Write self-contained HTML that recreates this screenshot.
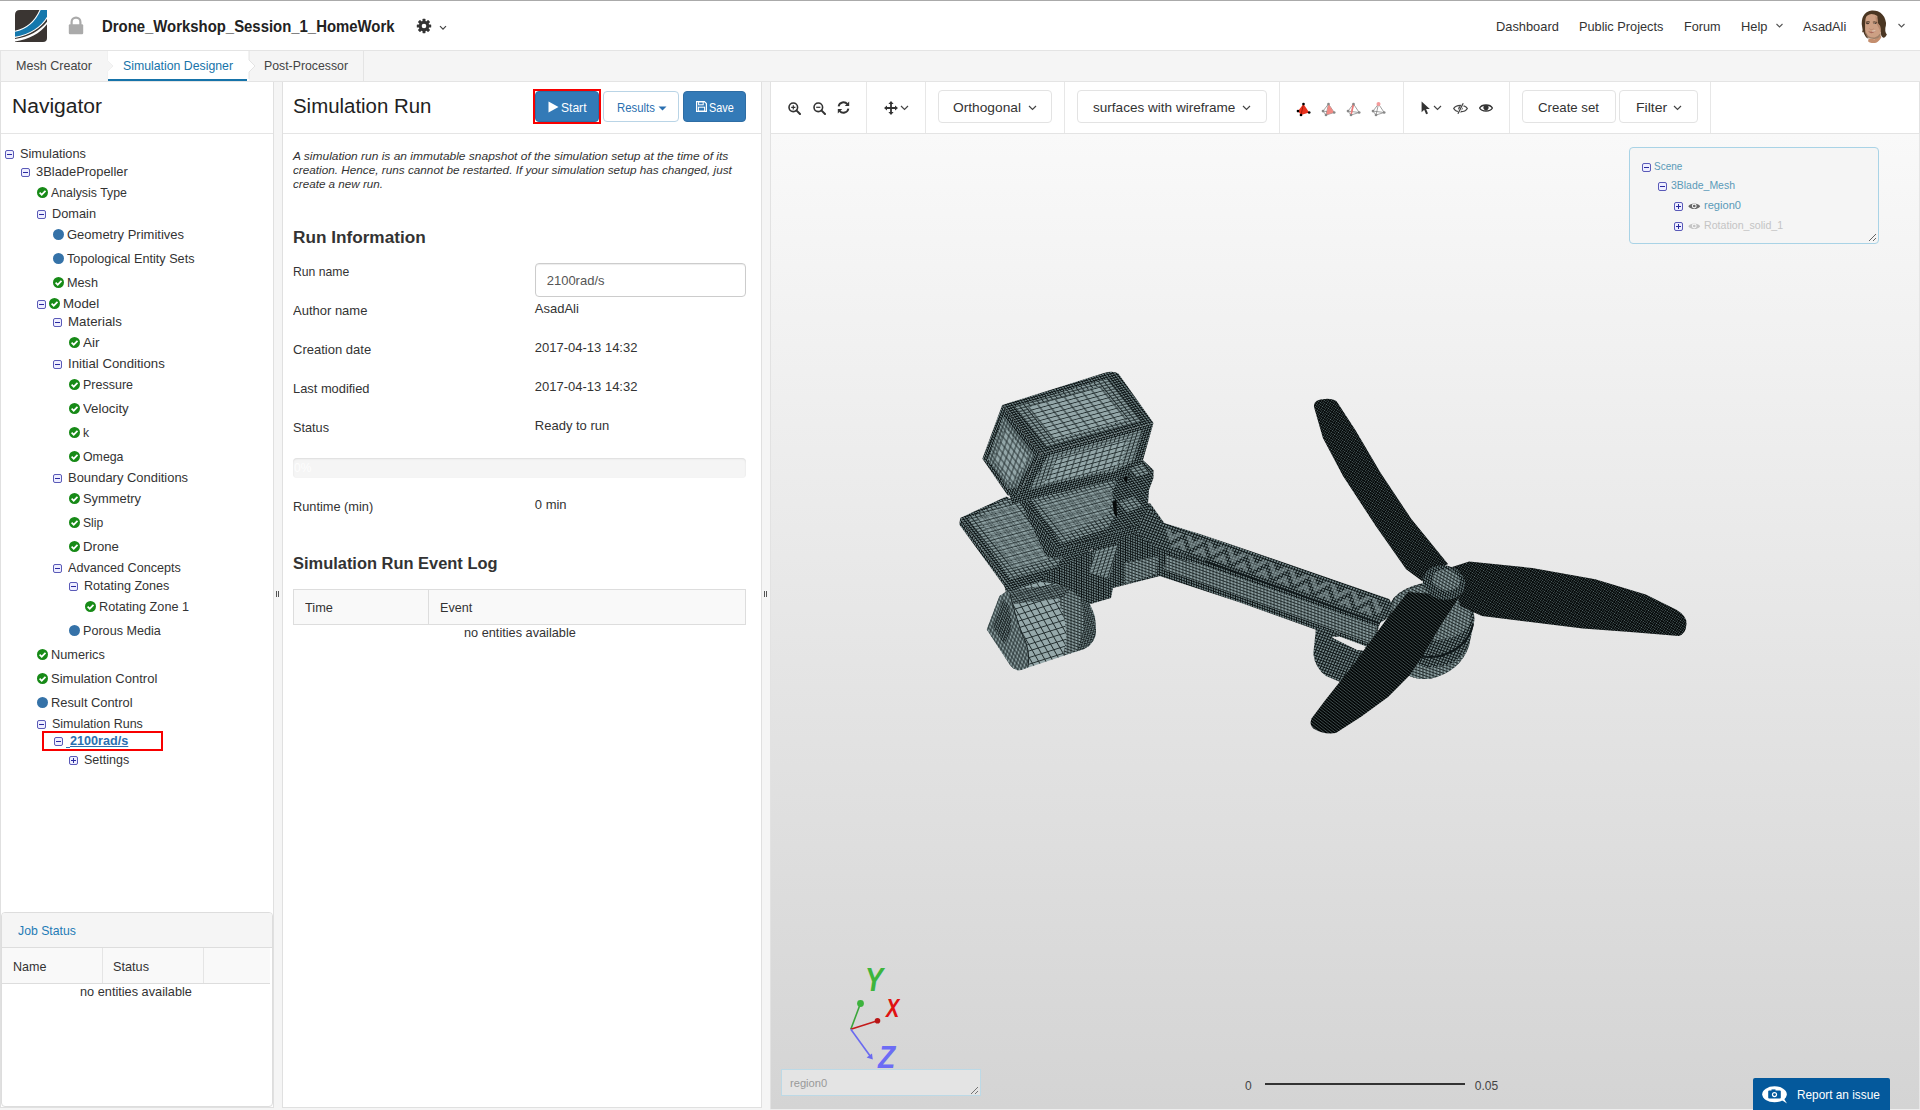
<!DOCTYPE html>
<html lang="en"><head><meta charset="utf-8"><title>SimScale Workbench</title>
<style>
*{box-sizing:border-box;margin:0;padding:0}
html,body{width:1920px;height:1110px;overflow:hidden;background:#f5f5f5;font-family:"Liberation Sans",sans-serif;font-size:14px;color:#333}
.a{position:absolute}
.t{position:absolute;white-space:nowrap;line-height:1.117;display:block;transform-origin:0 50%}
.tg{position:absolute;width:9px;height:9px;border:1px solid #5a5ab8;border-radius:2px;background:#eef}
.tg:before{content:"";position:absolute;left:1px;top:3px;width:5px;height:1px;background:#2a2aa0}
.tg.p:after{content:"";position:absolute;left:3px;top:1px;width:1px;height:5px;background:#2a2aa0}
.ok{position:absolute;width:11px;height:11px}
.dot{position:absolute;width:11px;height:11px;border-radius:50%;background:#3572a8}
.vd{position:absolute;top:82px;width:1px;height:51px;background:#e7e7e7}
.btn{position:absolute;border:1px solid #e3e3e3;border-radius:4px;background:#fff}

</style></head>
<body>
<div class="a" style="left:0;top:0;width:1920px;height:51px;background:#fff;border-top:1px solid #aaa;border-bottom:1px solid #e4e4e4"></div>
<div class="a" style="left:0;top:51px;width:1920px;height:31px;background:#f5f5f5;border-bottom:1px solid #e4e4e4"></div>
<div class="a" style="left:0;top:51px;width:364px;height:30px;background:#f5f5f5;border-right:1px solid #e4e4e4;border-left:1px solid #e4e4e4"></div>
<div class="a" style="left:108px;top:51px;width:141px;height:30px;background:#fff;border-bottom:2px solid #1673a9"></div>
<svg class="a" style="left:100px;top:51px" width="160" height="30"><path d="M7 0 L7 9 L13 15 L7 21 L7 30" fill="none" stroke="#e4e4e4" stroke-width="1"/><path d="M0 0 L7.5 0 L7.5 9 L13 15 L7.5 21 L7.5 30 L0 30Z" fill="#f5f5f5"/><path d="M149 0 L149 9 L155 15 L149 21 L149 30 L147 30 L147 0Z" fill="#fff"/><path d="M149 0 L149 9 L155 15 L149 21 L149 28" fill="none" stroke="#e4e4e4"/></svg>
<div class="a" style="left:0;top:82px;width:274px;height:1026px;background:#fff;border:1px solid #e0e0e0;border-top:none"></div>
<div class="a" style="left:1px;top:133px;width:272px;height:1px;background:#e5e5e5"></div>
<div class="a" style="left:1px;top:912px;width:272px;height:195px;background:#fff;border:1px solid #ddd;border-radius:4px"></div>
<div class="a" style="left:2px;top:913px;width:270px;height:35px;background:#f5f5f5;border-bottom:1px solid #ddd;border-radius:3px 3px 0 0"></div>
<div class="a" style="left:2px;top:948px;width:268px;height:36px;background:#f9f9f9;border-bottom:1px solid #ddd"></div>
<div class="a" style="left:102px;top:948px;width:1px;height:35px;background:#e5e5e5"></div>
<div class="a" style="left:203px;top:948px;width:1px;height:35px;background:#e5e5e5"></div>
<div class="a" style="left:282px;top:82px;width:480px;height:1026px;background:#fff;border:1px solid #e0e0e0;border-top:none"></div>
<div class="a" style="left:283px;top:133px;width:478px;height:1px;background:#e5e5e5"></div>
<div class="a" style="left:770px;top:82px;width:1150px;height:52px;background:#fff;border-left:1px solid #e2e2e2;border-right:1px solid #e2e2e2;border-bottom:1px solid #e4e4e4"></div>
<div class="a" id="view" style="left:770px;top:134px;width:1150px;height:975px;background:linear-gradient(#f9f9f9,#d4d4d4);border-left:1px solid #e2e2e2;border-right:1px solid #e6e6e6"></div>
<div class="tg" style="left:5.0px;top:150.0px"></div>
<div class="tg" style="left:21.0px;top:168.0px"></div>
<svg class="ok" style="left:37.0px;top:187.0px" viewBox="0 0 11 11"><circle cx="5.5" cy="5.5" r="5.5" fill="#178a17"/><path d="M2.6 5.7 L4.7 7.7 L8.5 3.8" fill="none" stroke="#fff" stroke-width="1.7"/></svg>
<div class="tg" style="left:37.0px;top:210.0px"></div>
<div class="dot" style="left:52.7px;top:229.0px"></div>
<div class="dot" style="left:52.7px;top:252.7px"></div>
<svg class="ok" style="left:52.7px;top:276.8px" viewBox="0 0 11 11"><circle cx="5.5" cy="5.5" r="5.5" fill="#178a17"/><path d="M2.6 5.7 L4.7 7.7 L8.5 3.8" fill="none" stroke="#fff" stroke-width="1.7"/></svg>
<div class="tg" style="left:37.0px;top:300.0px"></div>
<svg class="ok" style="left:49.0px;top:297.9px" viewBox="0 0 11 11"><circle cx="5.5" cy="5.5" r="5.5" fill="#178a17"/><path d="M2.6 5.7 L4.7 7.7 L8.5 3.8" fill="none" stroke="#fff" stroke-width="1.7"/></svg>
<div class="tg" style="left:53.0px;top:318.0px"></div>
<svg class="ok" style="left:69.0px;top:336.8px" viewBox="0 0 11 11"><circle cx="5.5" cy="5.5" r="5.5" fill="#178a17"/><path d="M2.6 5.7 L4.7 7.7 L8.5 3.8" fill="none" stroke="#fff" stroke-width="1.7"/></svg>
<div class="tg" style="left:53.0px;top:360.0px"></div>
<svg class="ok" style="left:69.0px;top:378.8px" viewBox="0 0 11 11"><circle cx="5.5" cy="5.5" r="5.5" fill="#178a17"/><path d="M2.6 5.7 L4.7 7.7 L8.5 3.8" fill="none" stroke="#fff" stroke-width="1.7"/></svg>
<svg class="ok" style="left:69.0px;top:402.7px" viewBox="0 0 11 11"><circle cx="5.5" cy="5.5" r="5.5" fill="#178a17"/><path d="M2.6 5.7 L4.7 7.7 L8.5 3.8" fill="none" stroke="#fff" stroke-width="1.7"/></svg>
<svg class="ok" style="left:69.0px;top:426.9px" viewBox="0 0 11 11"><circle cx="5.5" cy="5.5" r="5.5" fill="#178a17"/><path d="M2.6 5.7 L4.7 7.7 L8.5 3.8" fill="none" stroke="#fff" stroke-width="1.7"/></svg>
<svg class="ok" style="left:69.0px;top:450.8px" viewBox="0 0 11 11"><circle cx="5.5" cy="5.5" r="5.5" fill="#178a17"/><path d="M2.6 5.7 L4.7 7.7 L8.5 3.8" fill="none" stroke="#fff" stroke-width="1.7"/></svg>
<div class="tg" style="left:53.0px;top:474.0px"></div>
<svg class="ok" style="left:69.0px;top:493.1px" viewBox="0 0 11 11"><circle cx="5.5" cy="5.5" r="5.5" fill="#178a17"/><path d="M2.6 5.7 L4.7 7.7 L8.5 3.8" fill="none" stroke="#fff" stroke-width="1.7"/></svg>
<svg class="ok" style="left:69.0px;top:517.0px" viewBox="0 0 11 11"><circle cx="5.5" cy="5.5" r="5.5" fill="#178a17"/><path d="M2.6 5.7 L4.7 7.7 L8.5 3.8" fill="none" stroke="#fff" stroke-width="1.7"/></svg>
<svg class="ok" style="left:69.0px;top:540.9px" viewBox="0 0 11 11"><circle cx="5.5" cy="5.5" r="5.5" fill="#178a17"/><path d="M2.6 5.7 L4.7 7.7 L8.5 3.8" fill="none" stroke="#fff" stroke-width="1.7"/></svg>
<div class="tg" style="left:53.0px;top:564.0px"></div>
<div class="tg" style="left:69.0px;top:582.0px"></div>
<svg class="ok" style="left:84.9px;top:600.9px" viewBox="0 0 11 11"><circle cx="5.5" cy="5.5" r="5.5" fill="#178a17"/><path d="M2.6 5.7 L4.7 7.7 L8.5 3.8" fill="none" stroke="#fff" stroke-width="1.7"/></svg>
<div class="dot" style="left:69.0px;top:624.8px"></div>
<svg class="ok" style="left:37.0px;top:648.7px" viewBox="0 0 11 11"><circle cx="5.5" cy="5.5" r="5.5" fill="#178a17"/><path d="M2.6 5.7 L4.7 7.7 L8.5 3.8" fill="none" stroke="#fff" stroke-width="1.7"/></svg>
<svg class="ok" style="left:37.0px;top:672.9px" viewBox="0 0 11 11"><circle cx="5.5" cy="5.5" r="5.5" fill="#178a17"/><path d="M2.6 5.7 L4.7 7.7 L8.5 3.8" fill="none" stroke="#fff" stroke-width="1.7"/></svg>
<div class="dot" style="left:37.0px;top:696.8px"></div>
<div class="tg" style="left:37.0px;top:720.0px"></div>
<div class="tg" style="left:54.0px;top:737.0px"></div>
<div class="a" style="left:66px;top:747.1px;width:4px;height:1px;background:#2a6fb0"></div>
<div class="tg p" style="left:69.0px;top:756.0px"></div>
<div class="a" style="left:42px;top:731px;width:121px;height:20px;border:2px solid #f80000"></div>
<svg class="a" style="left:15px;top:10px" width="32" height="32" viewBox="0 0 32 32">
<defs><clipPath id="lg"><path d="M5 0 H32 V28 Q32 32 28 32 H0 V5 Q0 0 5 0Z"/></clipPath></defs>
<g clip-path="url(#lg)"><rect width="32" height="32" fill="#3a3532"/>
<path d="M-1 21.5 C12 19 21 10 25.5 -1 L33 -1 L33 6 C27 17 14 25.5 -1 27.5Z" fill="#1478ad" stroke="#fff" stroke-width="1.1"/>
<path d="M-1 29.2 C14 27.5 26 20 33 10.5 L33 13 C26 23 14 30 -1 31.5Z" fill="#fff"/>
</g></svg>
<svg class="a" style="left:68px;top:16px" width="16" height="19" viewBox="0 0 16 19"><path d="M3.6 9 V6 a4.4 4.4 0 0 1 8.8 0 V9" fill="none" stroke="#aaa" stroke-width="2.2"/><rect x="0.8" y="8.3" width="14.4" height="10" rx="1.2" fill="#aaa"/></svg>
<svg class="a" style="left:416px;top:18px" width="34" height="16" viewBox="0 0 34 16">
<g transform="translate(8,8)" fill="#333"><circle r="5.2"/><g id="gt"><rect x="-1.5" y="-7.2" width="3" height="14.4" rx="0.6"/></g><use href="#gt" transform="rotate(45)"/><use href="#gt" transform="rotate(90)"/><use href="#gt" transform="rotate(135)"/><circle r="2.3" fill="#fff"/></g>
<path d="M24 8.2 l3 3 l3 -3" fill="none" stroke="#444" stroke-width="1.2"/></svg>
<svg class="a" style="left:1775px;top:22px" width="10" height="8"><path d="M1.5 2 l3 3 l3 -3" fill="none" stroke="#555" stroke-width="1.1"/></svg>
<svg class="a" style="left:1897px;top:22px" width="10" height="8"><path d="M1.5 2 l3 3 l3 -3" fill="none" stroke="#555" stroke-width="1.1"/></svg>
<svg class="a" style="left:1850px;top:4px" width="50" height="44" viewBox="0 0 1261 1110">
<path d="M300 420 Q310 300 420 210 Q490 160 560 162 Q640 160 700 185 Q780 220 820 270 Q880 330 890 400 Q915 470 905 540 Q880 620 890 680 Q900 740 930 770 L900 820 Q870 850 840 850 Q800 830 790 800 L770 700 L420 800 L470 875 Q420 860 400 830 Q350 760 335 700 L305 720 Q330 660 310 600 Q285 500 300 420Z" fill="#4a3622"/>
<path d="M470 870 L620 890 L775 795 L790 845 Q760 900 700 950 Q660 985 620 985 Q560 990 520 980 Q480 965 455 940Z" fill="#c48e6e"/>
<path d="M390 380 Q400 310 440 290 Q490 250 540 250 Q620 250 690 300 L700 480 L760 560 Q780 630 775 700 L770 790 Q740 840 700 860 Q660 880 620 882 Q570 885 520 870 Q470 855 440 830 Q410 800 400 760 Q380 700 380 650 L380 520Z" fill="#cda084"/>
<path d="M400 700 Q420 780 470 815 Q540 850 620 845 Q700 830 772 730 L770 795 Q740 845 700 862 Q660 882 620 884 Q570 887 520 872 Q470 857 440 832 Q410 800 400 760Z" fill="#a08068"/>
<path d="M640 300 Q690 310 700 480 L760 560 L772 700 Q740 620 700 560 Q650 480 640 300Z" fill="#b98a6e"/>
<path d="M400 450 Q450 425 505 445 L500 465 Q450 450 402 470Z M575 445 Q630 430 685 455 L683 472 Q630 452 578 465Z" fill="#3b2a1c"/>
<ellipse cx="445" cy="492" rx="42" ry="17" fill="#4a3a30"/><ellipse cx="630" cy="488" rx="42" ry="17" fill="#4a3a30"/>
<circle cx="615" cy="488" r="10" fill="#e8e0d8"/>
<path d="M480 610 Q540 650 600 615 L600 630 Q540 665 480 625Z" fill="#b07e66"/>
<path d="M455 690 Q540 715 645 680 Q600 730 540 735 Q490 730 455 690Z" fill="#a8685a"/>
<path d="M555 672 Q600 668 640 662 L635 685 Q600 695 558 692Z" fill="#e6d2c4"/>
<path d="M380 520 Q370 640 420 800 L445 835 Q395 740 385 650Z" fill="#3e2c1c"/>
</svg>
<div class="a" style="left:533px;top:89px;width:68px;height:35px;border:2px solid #f80000"></div>
<div class="a" style="left:535px;top:91px;width:64px;height:31px;background:#337ab7;border:1px solid #2e6da4;border-radius:4px"></div>
<svg class="a" style="left:548px;top:101px" width="11" height="12"><path d="M0.5 0.5 L10.5 6 L0.5 11.5Z" fill="#fff"/></svg>
<div class="a" style="left:603px;top:91px;width:76px;height:31px;background:#fff;border:1px solid #b9d4e6;border-radius:4px"></div>
<svg class="a" style="left:657.7px;top:105.5px" width="9" height="5"><path d="M0.5 0.5 h8 l-4 4Z" fill="#2a6fb0"/></svg>
<div class="a" style="left:683px;top:91px;width:63px;height:31px;background:#337ab7;border:1px solid #2e6da4;border-radius:4px"></div>
<svg class="a" style="left:695.5px;top:101px" width="11" height="11" viewBox="0 0 11 11"><path d="M0.6 0.6 H8.4 L10.4 2.6 V10.4 H0.6Z" fill="none" stroke="#fff" stroke-width="1.2"/><rect x="2.6" y="0.8" width="4.6" height="3" fill="none" stroke="#fff" stroke-width="1"/><rect x="2.4" y="6.2" width="6.2" height="4" fill="none" stroke="#fff" stroke-width="1"/></svg>
<div class="a" style="left:535px;top:263px;width:211px;height:34px;background:#fff;border:1px solid #ccc;border-radius:4px;box-shadow:inset 0 1px 1px rgba(0,0,0,.075)"></div>
<div class="a" style="left:293px;top:458px;width:453px;height:20px;background:#f5f5f5;border-radius:4px;box-shadow:inset 0 1px 2px rgba(0,0,0,.1)"></div>
<div class="a" style="left:293px;top:589px;width:453px;height:36px;background:#f9f9f9;border:1px solid #ddd"></div>
<div class="a" style="left:428px;top:590px;width:1px;height:34px;background:#ddd"></div>
<div class="a" style="left:276px;top:591px;width:1px;height:6px;background:#555"></div><div class="a" style="left:278px;top:591px;width:1px;height:6px;background:#555"></div>
<div class="a" style="left:764px;top:591px;width:1px;height:6px;background:#555"></div><div class="a" style="left:766px;top:591px;width:1px;height:6px;background:#555"></div>
<div class="vd" style="left:866px"></div>
<div class="vd" style="left:925px"></div>
<div class="vd" style="left:1064px"></div>
<div class="vd" style="left:1279px"></div>
<div class="vd" style="left:1403px"></div>
<div class="vd" style="left:1509px"></div>
<div class="vd" style="left:1710px"></div>
<svg class="a" style="left:788px;top:102px" width="13" height="13" viewBox="0 0 13 13"><circle cx="5.3" cy="5.3" r="4.3" fill="none" stroke="#333" stroke-width="1.6"/><path d="M8.4 8.4 L12 12" stroke="#333" stroke-width="2" stroke-linecap="round"/><path d="M3.2 5.3 H7.4 M5.3 3.2 V7.4" stroke="#333" stroke-width="1.2"/></svg>
<svg class="a" style="left:812.5px;top:102px" width="13" height="13" viewBox="0 0 13 13"><circle cx="5.3" cy="5.3" r="4.3" fill="none" stroke="#333" stroke-width="1.6"/><path d="M8.4 8.4 L12 12" stroke="#333" stroke-width="2" stroke-linecap="round"/><path d="M3.2 5.3 H7.4" stroke="#333" stroke-width="1.2"/></svg>
<svg class="a" style="left:837px;top:101px" width="13" height="13" viewBox="0 0 13 13"><path d="M1.6 5.4 A5 5 0 0 1 10.4 3.2" fill="none" stroke="#333" stroke-width="1.9"/><path d="M12.2 0.6 V5 H7.8Z" fill="#333"/><path d="M11.4 7.6 A5 5 0 0 1 2.6 9.8" fill="none" stroke="#333" stroke-width="1.9"/><path d="M0.8 12.4 V8 H5.2Z" fill="#333"/></svg>
<svg class="a" style="left:883.5px;top:100.5px" width="14" height="14" viewBox="0 0 14 14"><path d="M7 0 L9.6 3 H7.9 V6.1 H11 V4.4 L14 7 L11 9.6 V7.9 H7.9 V11 H9.6 L7 14 L4.4 11 H6.1 V7.9 H3 V9.6 L0 7 L3 4.4 V6.1 H6.1 V3 H4.4Z" fill="#333"/></svg>
<svg class="a" style="left:899.5px;top:105.0px" width="9" height="6"><path d="M1 1 l3.5 3.5 l3.5 -3.5" fill="none" stroke="#444" stroke-width="1.2"/></svg>
<div class="btn" style="left:938px;top:90px;width:114px;height:33.4px"></div>
<svg class="a" style="left:1027.7px;top:105.0px" width="9" height="6"><path d="M1 1 l3.5 3.5 l3.5 -3.5" fill="none" stroke="#444" stroke-width="1.2"/></svg>
<div class="btn" style="left:1077px;top:90px;width:190px;height:33.4px"></div>
<svg class="a" style="left:1241.7px;top:105.0px" width="9" height="6"><path d="M1 1 l3.5 3.5 l3.5 -3.5" fill="none" stroke="#444" stroke-width="1.2"/></svg>
<svg class="a" style="left:1295.8px;top:102.2px" width="16" height="16" viewBox="0 0 16 16"><path d="M7.5 2 L2 9.1 L5 13 L13.2 10.5Z" fill="#e8321e"/><path d="M7.5 2 L5 13" stroke="#a01505" stroke-width="0.8"/><circle cx="7.5" cy="2.0" r="1.35" fill="#000"/><circle cx="2.0" cy="9.1" r="1.35" fill="#000"/><circle cx="13.2" cy="10.5" r="1.35" fill="#000"/><circle cx="5.0" cy="13.0" r="1.35" fill="#000"/></svg>
<svg class="a" style="left:1321.0px;top:102.2px" width="16" height="16" viewBox="0 0 16 16"><path d="M7.5 2 L2 9.1 L5 13 L13.2 10.5Z M7.5 2 L5 13 M2 9.1 L13.2 10.5" fill="none" stroke="#777" stroke-width="0.7"/><path d="M7.5 2 L5 13 L13.2 10.5Z" fill="#f08a84"/><circle cx="7.5" cy="2.0" r="1.35" fill="#888"/><circle cx="2.0" cy="9.1" r="1.35" fill="#888"/><circle cx="13.2" cy="10.5" r="1.35" fill="#888"/><circle cx="5.0" cy="13.0" r="1.35" fill="#888"/></svg>
<svg class="a" style="left:1346.2px;top:102.2px" width="16" height="16" viewBox="0 0 16 16"><path d="M7.5 2 L2 9.1 L5 13 L13.2 10.5Z M7.5 2 L5 13 M2 9.1 L13.2 10.5" fill="none" stroke="#777" stroke-width="0.7"/><path d="M7.5 2 L5 13" stroke="#ee7a78" stroke-width="1.6"/><circle cx="7.5" cy="2.0" r="1.35" fill="#888"/><circle cx="2.0" cy="9.1" r="1.35" fill="#888"/><circle cx="13.2" cy="10.5" r="1.35" fill="#888"/><circle cx="5.0" cy="13.0" r="1.35" fill="#888"/></svg>
<svg class="a" style="left:1371.4px;top:102.2px" width="16" height="16" viewBox="0 0 16 16"><path d="M7.5 2 L2 9.1 L5 13 L13.2 10.5Z M7.5 2 L5 13 M2 9.1 L13.2 10.5" fill="none" stroke="#777" stroke-width="0.7"/><circle cx="7.5" cy="2.0" r="2" fill="#f49b9b"/><circle cx="2.0" cy="9.1" r="1.35" fill="#888"/><circle cx="13.2" cy="10.5" r="1.35" fill="#888"/><circle cx="5.0" cy="13.0" r="1.35" fill="#888"/></svg>
<svg class="a" style="left:1420.5px;top:100.5px" width="10" height="14" viewBox="0 0 10 14"><path d="M0.6 0.4 L0.6 11.2 L3.2 8.8 L5.1 13.2 L7 12.4 L5.1 8.1 L8.8 8.1Z" fill="#333"/></svg>
<svg class="a" style="left:1433.0px;top:105.2px" width="9" height="6"><path d="M1 1 l3.5 3.5 l3.5 -3.5" fill="none" stroke="#444" stroke-width="1.2"/></svg>
<svg class="a" style="left:1453px;top:102.5px" width="15" height="11" viewBox="0 0 15 11"><path d="M0.7 5.5 C3 1.2 12 1.2 14.3 5.5 C12 9.8 3 9.8 0.7 5.5Z" fill="none" stroke="#444" stroke-width="1.3"/><circle cx="7.5" cy="5.3" r="2.2" fill="#444"/><path d="M10.5 0.3 L5.2 10.8" stroke="#fff" stroke-width="2.4"/><path d="M10.2 0.3 L4.9 10.8" stroke="#444" stroke-width="1.2"/></svg>
<svg class="a" style="left:1478.8px;top:103px" width="14" height="10" viewBox="0 0 14 10"><path d="M0.6 5 C2.8 1 11.2 1 13.4 5 C11.2 9 2.8 9 0.6 5Z" fill="none" stroke="#333" stroke-width="1.4"/><circle cx="7" cy="4.6" r="2.6" fill="#333"/></svg>
<div class="btn" style="left:1522px;top:90px;width:93.5px;height:33.4px"></div>
<div class="btn" style="left:1619px;top:90px;width:79px;height:33.4px"></div>
<svg class="a" style="left:1673.0px;top:105.0px" width="9" height="6"><path d="M1 1 l3.5 3.5 l3.5 -3.5" fill="none" stroke="#444" stroke-width="1.2"/></svg>
<div class="a" style="left:1629px;top:147px;width:250px;height:97px;background:#f5f5f5;border:1px solid #a9d3e6;border-radius:4px"></div>
<svg class="a" style="left:1868px;top:233px" width="9" height="9"><path d="M1 8 L8 1 M5 8 L8 5" stroke="#555" stroke-width="0.9"/></svg>
<div class="tg" style="left:1642px;top:163px"></div>
<div class="tg" style="left:1658px;top:182px"></div>
<div class="tg p" style="left:1674px;top:202px"></div>
<div class="tg p" style="left:1674px;top:222px"></div>
<svg class="a" style="left:1688px;top:202.0px" width="12.5" height="8.4" viewBox="0 0 12 8"><path d="M0.3 4 C2.4 0.4 9.6 0.4 11.7 4 C9.6 7.6 2.4 7.6 0.3 4Z" fill="#666"/><circle cx="6" cy="3.8" r="2.3" fill="#f5f5f5"/><circle cx="6" cy="3.8" r="1.3" fill="#666"/></svg>
<svg class="a" style="left:1688px;top:222.0px" width="12.5" height="8.4" viewBox="0 0 12 8"><path d="M0.3 4 C2.4 0.4 9.6 0.4 11.7 4 C9.6 7.6 2.4 7.6 0.3 4Z" fill="#c4c4c4"/><circle cx="6" cy="3.8" r="2.3" fill="#f5f5f5"/><circle cx="6" cy="3.8" r="1.3" fill="#c4c4c4"/></svg>
<svg class="a" style="left:840px;top:960px" width="70" height="115" viewBox="840 960 70 115">
<path d="M850.8 1029.2 L860.3 1004" stroke="#3aa63a" stroke-width="1.6"/><circle cx="860.5" cy="1003.5" r="3.4" fill="#3db33d"/>
<path d="M850.8 1029.2 L877.5 1020.8" stroke="#c41a1a" stroke-width="1.6"/><circle cx="877.5" cy="1020.8" r="2.8" fill="#b81414"/>
<path d="M850.8 1029.2 L870.5 1056.5" stroke="#6a6af0" stroke-width="1.6"/><path d="M872.8 1059.6 L866.6 1057.6 L872 1053.6Z" fill="#6a6af0"/>
</svg>
<div class="a" style="left:781px;top:1069px;width:200px;height:27px;background:#e4e4e4;border:1px solid #bcd9e6"></div>
<svg class="a" style="left:970px;top:1086px" width="9" height="9"><path d="M1 8 L8 1 M5 8 L8 5" stroke="#666" stroke-width="0.9"/></svg>
<div class="a" style="left:1265px;top:1083px;width:200px;height:2px;background:#333"></div>
<div class="a" style="left:770px;top:1109px;width:1150px;height:1px;background:#eee"></div>
<div class="a" style="left:1753px;top:1078px;width:137px;height:32px;background:#04599c;border-radius:2px 2px 0 0"></div>
<svg class="a" style="left:1762px;top:1086px" width="27" height="19" viewBox="0 0 27 19"><ellipse cx="12.5" cy="8.3" rx="12.3" ry="8" fill="#fff"/><path d="M18 13 L25 17.5 L21 11Z" fill="#fff"/><rect x="6.2" y="4.6" width="12.6" height="8" rx="1" fill="#04599c"/><rect x="9.5" y="3.4" width="4" height="2" fill="#04599c"/><circle cx="12.5" cy="8.6" r="2.6" fill="#fff"/><circle cx="12.5" cy="8.6" r="1.4" fill="#04599c"/></svg>
<svg class="a" style="left:900px;top:340px" width="840" height="420" viewBox="900 340 840 420">
<defs>
<pattern id="tL" width="9" height="4.5" patternUnits="userSpaceOnUse" patternTransform="matrix(1 -0.27 0.62 0.78 0 0)"><rect width="9" height="4.5" fill="#93a6a8"/><path d="M0 2.25 H9 M4.5 0 V4.5" stroke="#222d2e" stroke-width="1.0" fill="none"/></pattern>
<pattern id="tM" width="4.5" height="3.2" patternUnits="userSpaceOnUse" patternTransform="matrix(1 -0.27 0.62 0.78 0 0)"><rect width="4.5" height="3.2" fill="#8b9ea0"/><path d="M0 1.6 H4.5 M2.25 0 V3.2" stroke="#1c2627" stroke-width="1.0" fill="none"/></pattern>
<pattern id="tD" width="2.6" height="2.6" patternUnits="userSpaceOnUse" patternTransform="matrix(1 -0.27 0.62 0.78 0 0)"><rect width="2.6" height="2.6" fill="#6f8385"/><path d="M0 1.3 H2.6 M1.3 0 V2.6" stroke="#0c1213" stroke-width="0.95" fill="none"/></pattern>
<pattern id="lL" width="6" height="6" patternUnits="userSpaceOnUse" patternTransform="matrix(0.62 0.78 -0.34 0.94 0 0)"><rect width="6" height="6" fill="#93a6a8"/><path d="M0 3.0 H6 M3.0 0 V6" stroke="#222d2e" stroke-width="1.0" fill="none"/></pattern>
<pattern id="lM" width="3.8" height="3.8" patternUnits="userSpaceOnUse" patternTransform="matrix(0.62 0.78 -0.34 0.94 0 0)"><rect width="3.8" height="3.8" fill="#8b9ea0"/><path d="M0 1.9 H3.8 M1.9 0 V3.8" stroke="#1c2627" stroke-width="1.0" fill="none"/></pattern>
<pattern id="lD" width="2.6" height="2.6" patternUnits="userSpaceOnUse" patternTransform="matrix(0.62 0.78 -0.34 0.94 0 0)"><rect width="2.6" height="2.6" fill="#6f8385"/><path d="M0 1.3 H2.6 M1.3 0 V2.6" stroke="#0c1213" stroke-width="0.95" fill="none"/></pattern>
<pattern id="fL" width="7" height="5" patternUnits="userSpaceOnUse" patternTransform="matrix(1 -0.27 -0.3 0.95 0 0)"><rect width="7" height="5" fill="#93a6a8"/><path d="M0 2.5 H7 M3.5 0 V5" stroke="#222d2e" stroke-width="1.0" fill="none"/></pattern>
<pattern id="fM" width="4.4" height="3.4" patternUnits="userSpaceOnUse" patternTransform="matrix(1 -0.27 -0.3 0.95 0 0)"><rect width="4.4" height="3.4" fill="#8b9ea0"/><path d="M0 1.7 H4.4 M2.2 0 V3.4" stroke="#1c2627" stroke-width="1.0" fill="none"/></pattern>
<pattern id="fD" width="2.6" height="2.6" patternUnits="userSpaceOnUse" patternTransform="matrix(1 -0.27 -0.3 0.95 0 0)"><rect width="2.6" height="2.6" fill="#6f8385"/><path d="M0 1.3 H2.6 M1.3 0 V2.6" stroke="#0c1213" stroke-width="0.95" fill="none"/></pattern>
<pattern id="aT" width="2.8" height="2.8" patternUnits="userSpaceOnUse" patternTransform="matrix(0.94 0.33 -0.4 0.9 0 0)"><rect width="2.8" height="2.8" fill="#748789"/><path d="M0 1.4 H2.8 M1.4 0 V2.8" stroke="#0e1516" stroke-width="0.95" fill="none"/></pattern>
<pattern id="aS" width="3.6" height="3.0" patternUnits="userSpaceOnUse" patternTransform="matrix(0.94 0.33 0 1 0 0)"><rect width="3.6" height="3.0" fill="#8b9ea0"/><path d="M0 1.5 H3.6 M1.8 0 V3.0" stroke="#172021" stroke-width="0.85" fill="none"/></pattern>
<pattern id="aD" width="2.6" height="2.6" patternUnits="userSpaceOnUse" patternTransform="matrix(0.94 0.33 0 1 0 0)"><rect width="2.6" height="2.6" fill="#6f8385"/><path d="M0 1.3 H2.6 M1.3 0 V2.6" stroke="#0c1213" stroke-width="0.95" fill="none"/></pattern>
<pattern id="cL" width="6.5" height="6.5" patternUnits="userSpaceOnUse" patternTransform="matrix(0.95 -0.3 0.5 0.86 0 0)"><rect width="6.5" height="6.5" fill="#95a8aa"/><path d="M0 3.25 H6.5 M3.25 0 V6.5" stroke="#222d2e" stroke-width="0.95" fill="none"/></pattern>
<pattern id="mBl" width="2" height="2" patternUnits="userSpaceOnUse" patternTransform="rotate(35)"><rect width="2" height="2" fill="#040707"/><rect width="1" height="1" fill="#5a6e70"/></pattern>
<pattern id="mBl2" width="2.4" height="2" patternUnits="userSpaceOnUse" patternTransform="rotate(-52)"><rect width="2.4" height="2" fill="#040707"/><rect width="0.75" height="2" fill="#3f4e4f"/></pattern>
<pattern id="chev" width="22" height="14" patternUnits="userSpaceOnUse" patternTransform="matrix(0.94 0.33 -0.4 0.9 0 0)"><path d="M0 14 L11 0 L22 14 L22 7 L11 -7 L0 7Z M0 28 L11 14 L22 28 L22 21 L11 7 L0 21Z" fill="#93a6a8" opacity="0.5"/></pattern>
</defs>
<polygon points="960.2,517.9 959.3,524.5 1008.5,592.0 1012.0,590.5 1062.0,577.5 1095.0,566.0 1092.0,552.0 1008.0,586.0" fill="url(#lD)"/>
<polygon points="1006.3,496.5 960.2,517.9 1008.0,586.0 1060.0,572.0 1092.0,552.0 1050.0,520.0" fill="url(#tD)"/>
<polygon points="1004.0,500.0 968.0,518.5 1010.5,579.0 1056.0,566.5 1064.0,556.0 1024.0,500.0" fill="url(#tM)"/>
<polygon points="1000.0,506.0 978.0,518.5 1013.0,570.0 1046.0,561.0 1050.0,556.0 1016.0,505.0" fill="url(#tL)" opacity="0.55"/>
<polygon points="1004.0,584.0 1080.0,566.0 1090.0,598.0 1008.0,602.0" fill="url(#tD)"/>
<path d="M1006.5 591.5 L999.5 596 L986.8 629.5 L1010.3 665.6 Q1015 671 1021 670 L1084 649 Q1096 643 1096 630 L1095 616 Q1090 600 1075 585 L1040 582Z" fill="url(#cL)"/>
<path d="M1006.5 591.5 L999.5 596 L986.8 629.5 L1010.3 665.6 Q1015 671 1021 670 L1028 667.5 Q1031 650 1022 634 Q1014 612 1010 592Z" fill="url(#lM)"/>
<path d="M1003 600 L993 627 L1004 644 Q1016 630 1008 604Z" fill="url(#lD)" opacity="0.8"/>
<path d="M1070 584 Q1094 606 1096 630 Q1096 643 1084 649 L1062 656 Q1072 632 1058 600Z" fill="url(#aS)"/>
<path d="M1086 598 Q1096 612 1096 630 Q1096 643 1084 649 L1076 651.5 Q1088 630 1080 596Z" fill="url(#fD)" opacity="0.7"/>
<path d="M1008 590 L1078 582 L1062 598 L1014 604Z" fill="url(#tD)" opacity="0.75"/>
<path d="M1028 667 Q1031 650 1022 634 Q1014 612 1010 594" stroke="#1a2324" stroke-width="1" fill="none"/>
<polygon points="1040.0,578.0 1092.0,550.0 1150.0,503.0 1165.0,524.0 1212.0,541.0 1207.0,562.0 1160.0,576.0 1113.0,588.0 1111.0,598.0 1089.0,604.5 1068.0,588.0" fill="url(#aD)"/>
<polygon points="1094.0,551.0 1118.0,545.0 1109.0,578.0 1090.0,573.0" fill="url(#fM)"/>
<polygon points="1125.0,562.5 1158.0,556.5 1157.0,574.0 1125.0,584.0" fill="url(#aS)"/>
<polygon points="1147.0,504.0 1161.6,522.2 1200.0,534.0 1240.0,547.4 1389.2,598.9 1397.0,612.0 1380.0,623.0 1240.0,573.0 1205.0,561.0 1160.0,549.0 1130.0,530.0" fill="url(#aT)"/>
<polygon points="1165.0,528.0 1240.0,552.0 1385.0,602.0 1378.0,618.0 1240.0,569.0 1205.0,557.0 1168.0,546.0" fill="url(#chev)"/>
<polygon points="1160.0,549.0 1205.0,561.0 1240.0,573.0 1380.0,623.0 1372.0,650.0 1315.3,629.5 1240.0,602.5 1158.0,575.5" fill="url(#aD)"/>
<polygon points="1166.0,555.0 1205.0,566.0 1240.0,578.5 1377.0,627.0 1372.0,644.0 1315.3,623.5 1240.0,596.5 1164.0,570.0" fill="url(#aS)"/>
<path d="M1205 561 L1380 623.5" stroke="#10181a" stroke-width="1.8"/>
<polygon points="1017.0,495.0 1026.0,497.0 1058.0,549.0 1053.8,559.0 1046.0,556.0" fill="url(#lD)"/>
<polygon points="1058.0,549.0 1113.0,532.0 1140.0,521.0 1138.0,532.0 1110.0,545.0 1053.8,559.0" fill="url(#fD)"/>
<polygon points="1022.0,495.5 1118.0,470.0 1150.0,505.0 1138.0,524.0 1113.0,533.0 1058.0,550.0" fill="url(#tD)"/>
<polygon points="1031.0,499.5 1113.0,478.5 1121.0,492.0 1117.0,512.0 1108.0,528.0 1061.0,543.5" fill="url(#tM)"/>
<polygon points="1040.0,503.0 1108.0,485.0 1113.0,496.0 1108.0,514.0 1064.0,536.0" fill="url(#tL)" opacity="0.5"/>
<polygon points="1126.0,466.0 1143.0,460.0 1153.5,470.0 1153.5,478.0 1149.0,490.0 1148.0,504.0 1136.0,522.0 1115.0,512.0 1112.0,492.0" fill="url(#tD)"/>
<polygon points="1123.5,470.0 1127.5,468.0 1127.0,484.0 1124.0,480.0" fill="#070a0a"/>
<polygon points="1112.5,502.0 1116.5,500.0 1117.0,517.0 1114.0,514.0" fill="#070a0a"/>
<polygon points="1129.0,469.0 1142.0,464.0 1150.0,472.0 1137.0,477.0" fill="url(#tM)"/>
<polygon points="1119.0,502.0 1133.0,497.0 1142.0,506.0 1128.0,512.0" fill="url(#tM)"/>
<polygon points="1009.0,494.0 1126.0,464.0 1130.0,476.0 1012.0,504.0" fill="url(#fD)"/>
<polygon points="1002.2,405.0 1040.9,453.7 1017.7,494.8 1007.7,495.5 982.4,458.7" fill="url(#lD)"/>
<polygon points="1003.8,416.3 1034.8,455.3 1016.2,488.1 1008.2,488.7 988.0,459.3" fill="url(#lM)"/>
<polygon points="1005.4,427.6 1028.6,456.8 1014.7,481.5 1008.7,481.9 993.5,459.8" fill="url(#lL)"/>
<polygon points="1040.9,453.7 1153.5,423.1 1143.0,460.0 1120.0,472.4 1043.7,487.6 1017.7,494.8" fill="url(#fD)"/>
<polygon points="1048.2,455.6 1142.8,429.8 1134.0,460.8 1114.6,471.3 1050.5,484.0 1028.7,490.1" fill="url(#fM)"/>
<polygon points="1058.2,458.1 1128.0,439.1 1121.5,462.0 1107.3,469.7 1060.0,479.1 1043.8,483.6" fill="url(#fL)"/>
<path d="M1002.2 405 L1104 373 Q1113 370.5 1118.4 373.5 L1153.5 423.1 L1040.9 453.7Z" fill="url(#tD)"/>
<polygon points="1014.3,406.2 1107.2,378.6 1141.6,421.2 1046.5,447.0" fill="url(#tM)"/>
<polygon points="1027.5,407.6 1100.9,385.9 1128.1,419.5 1053.0,439.9" fill="url(#tL)"/>
<path d="M1316 628 L1313.3 653.7 Q1315 668 1326 676 L1345 684 L1372 676 L1376 652 L1357.5 650 L1332.3 637.5 L1339.5 632Z" fill="url(#aT)"/>
<path d="M1332.3 637.5 L1339.5 636.6 L1366.5 646.5 L1357.5 650Z" fill="#e6e6e6"/>
<path d="M1388 615 Q1388 588 1430 582 Q1474 588 1474.6 619.5 L1469 646 Q1460 672 1429.5 679 Q1408 680 1400 668 Z" fill="url(#aT)"/>
<ellipse cx="1431" cy="613" rx="40" ry="27" fill="url(#aS)" transform="rotate(8 1431 613)"/>
<path d="M1392 630 Q1400 662 1440 656 Q1468 648 1473 624" stroke="#10181a" stroke-width="2" fill="none"/>
<path d="M1400 652 Q1420 674 1450 664 Q1466 656 1470 640 L1469 646 Q1460 672 1429.5 679 Q1408 680 1400 668Z" fill="url(#aS)"/>
<path d="M1314 407 Q1313 399 1325.4 398.9 Q1333 398.5 1336.8 401.4 L1355.7 430.5 L1380.9 473.3 L1411.2 518.8 L1448 564 L1422 581 L1406.1 569.2 L1375.9 526.3 L1343 475.9 L1322.9 438 Z" fill="url(#mBl)"/>
<path d="M1452 567 L1469.2 561.6 L1532.3 568 L1595.3 579.3 L1645.8 594.4 L1676 609.6 Q1687 616 1686.5 624 Q1686 634 1678.6 636 L1633.2 632.3 L1582.7 628.5 L1532.3 622.2 L1481.8 615.9 L1460 606 Z" fill="url(#mBl)"/>
<path d="M1408 592 L1386.3 619.5 L1352.1 666.3 L1325 700.5 L1311.5 718.6 Q1309 725 1313.3 728.5 Q1324 735 1335.9 733 L1361.1 716.8 L1388.1 696.9 L1409.7 675.3 L1424.1 653.7 L1442.2 623.1 L1460 596 Z" fill="url(#mBl2)"/>
<ellipse cx="1444" cy="582.5" rx="21.5" ry="17" fill="url(#aD)" transform="rotate(12 1444 582.5)"/>
<ellipse cx="1446" cy="580" rx="14" ry="10.5" fill="url(#aS)" transform="rotate(12 1446 580)"/>
</svg>
<span class="t" id="t0" style="left:102.0px;top:16.8px;font-size:16.41px;color:#222;font-weight:bold;transform:scaleX(0.9079);">Drone_Workshop_Session_1_HomeWork</span>
<span class="t" id="t1" style="left:1495.6px;top:18.8px;font-size:13.51px;color:#333;transform:scaleX(0.9508);">Dashboard</span>
<span class="t" id="t2" style="left:1578.6px;top:18.8px;font-size:13.51px;color:#333;transform:scaleX(0.9452);">Public Projects</span>
<span class="t" id="t3" style="left:1683.5px;top:18.8px;font-size:13.51px;color:#333;transform:scaleX(0.9355);">Forum</span>
<span class="t" id="t4" style="left:1741.0px;top:18.8px;font-size:13.51px;color:#333;transform:scaleX(0.9508);">Help</span>
<span class="t" id="t5" style="left:1802.7px;top:18.8px;font-size:13.51px;color:#333;transform:scaleX(0.9458);">AsadAli</span>
<span class="t" id="t6" style="left:16.0px;top:57.5px;font-size:13.51px;color:#444;transform:scaleX(0.9293);">Mesh Creator</span>
<span class="t" id="t7" style="left:123.0px;top:57.5px;font-size:13.51px;color:#1673a9;transform:scaleX(0.9105);">Simulation Designer</span>
<span class="t" id="t8" style="left:264.0px;top:57.5px;font-size:13.51px;color:#444;transform:scaleX(0.9103);">Post-Processor</span>
<span class="t" id="t9" style="left:12.0px;top:94.2px;font-size:20.75px;color:#222;transform:scaleX(1.0134);">Navigator</span>
<span class="t" id="t10" style="left:293.3px;top:94.4px;font-size:20.75px;color:#222;transform:scaleX(0.9835);">Simulation Run</span>
<span class="t" id="t11" style="left:19.9px;top:145.9px;font-size:13.51px;color:#333;transform:scaleX(0.9444);">Simulations</span>
<span class="t" id="t12" style="left:36.2px;top:163.6px;font-size:13.51px;color:#333;transform:scaleX(0.9556);">3BladePropeller</span>
<span class="t" id="t13" style="left:51.2px;top:184.9px;font-size:13.51px;color:#333;transform:scaleX(0.9139);">Analysis Type</span>
<span class="t" id="t14" style="left:52.0px;top:205.7px;font-size:13.51px;color:#333;transform:scaleX(0.9456);">Domain</span>
<span class="t" id="t15" style="left:67.0px;top:226.9px;font-size:13.51px;color:#333;transform:scaleX(0.9627);">Geometry Primitives</span>
<span class="t" id="t16" style="left:67.0px;top:250.6px;font-size:13.51px;color:#333;transform:scaleX(0.9387);">Topological Entity Sets</span>
<span class="t" id="t17" style="left:67.0px;top:274.7px;font-size:13.51px;color:#333;transform:scaleX(0.9389);">Mesh</span>
<span class="t" id="t18" style="left:62.8px;top:295.8px;font-size:13.51px;color:#333;transform:scaleX(0.9842);">Model</span>
<span class="t" id="t19" style="left:67.7px;top:313.9px;font-size:13.51px;color:#333;transform:scaleX(0.9842);">Materials</span>
<span class="t" id="t20" style="left:83.0px;top:334.7px;font-size:13.51px;color:#333;transform:scaleX(1.0061);">Air</span>
<span class="t" id="t21" style="left:67.7px;top:355.9px;font-size:13.51px;color:#333;transform:scaleX(0.9772);">Initial Conditions</span>
<span class="t" id="t22" style="left:83.0px;top:376.7px;font-size:13.51px;color:#333;transform:scaleX(0.9254);">Pressure</span>
<span class="t" id="t23" style="left:83.0px;top:400.6px;font-size:13.51px;color:#333;transform:scaleX(0.9821);">Velocity</span>
<span class="t" id="t24" style="left:83.0px;top:424.8px;font-size:13.51px;color:#333;transform:scaleX(0.9000);">k</span>
<span class="t" id="t25" style="left:83.0px;top:448.7px;font-size:13.51px;color:#333;transform:scaleX(0.9146);">Omega</span>
<span class="t" id="t26" style="left:67.7px;top:469.9px;font-size:13.51px;color:#333;transform:scaleX(0.9582);">Boundary Conditions</span>
<span class="t" id="t27" style="left:83.0px;top:491.0px;font-size:13.51px;color:#333;transform:scaleX(0.9547);">Symmetry</span>
<span class="t" id="t28" style="left:83.0px;top:514.9px;font-size:13.51px;color:#333;transform:scaleX(0.9000);">Slip</span>
<span class="t" id="t29" style="left:83.0px;top:538.8px;font-size:13.51px;color:#333;transform:scaleX(0.9760);">Drone</span>
<span class="t" id="t30" style="left:67.7px;top:559.9px;font-size:13.51px;color:#333;transform:scaleX(0.9336);">Advanced Concepts</span>
<span class="t" id="t31" style="left:84.0px;top:578.0px;font-size:13.51px;color:#333;transform:scaleX(0.9327);">Rotating Zones</span>
<span class="t" id="t32" style="left:99.0px;top:598.8px;font-size:13.51px;color:#333;transform:scaleX(0.9369);">Rotating Zone 1</span>
<span class="t" id="t33" style="left:83.0px;top:622.7px;font-size:13.51px;color:#333;transform:scaleX(0.9340);">Porous Media</span>
<span class="t" id="t34" style="left:51.2px;top:646.6px;font-size:13.51px;color:#333;transform:scaleX(0.9436);">Numerics</span>
<span class="t" id="t35" style="left:51.2px;top:670.8px;font-size:13.51px;color:#333;transform:scaleX(0.9636);">Simulation Control</span>
<span class="t" id="t36" style="left:51.2px;top:694.7px;font-size:13.51px;color:#333;transform:scaleX(0.9527);">Result Control</span>
<span class="t" id="t37" style="left:52.0px;top:715.9px;font-size:13.51px;color:#333;transform:scaleX(0.9237);">Simulation Runs</span>
<span class="t" id="t38" style="left:69.5px;top:733.4px;font-size:13.51px;color:#2a6fb0;font-weight:bold;transform:scaleX(0.9356);text-decoration:underline;">2100rad/s</span>
<span class="t" id="t39" style="left:84.0px;top:752.0px;font-size:13.51px;color:#333;transform:scaleX(0.9286);">Settings</span>
<span class="t" id="t40" style="left:17.7px;top:922.8px;font-size:13.51px;color:#1f7bb6;transform:scaleX(0.9076);">Job Status</span>
<span class="t" id="t41" style="left:12.9px;top:958.8px;font-size:13.51px;color:#333;transform:scaleX(0.9274);">Name</span>
<span class="t" id="t42" style="left:113.0px;top:958.8px;font-size:13.51px;color:#333;transform:scaleX(0.9404);">Status</span>
<span class="t" id="t43" style="left:79.8px;top:984.1px;font-size:13.51px;color:#333;transform:scaleX(0.9436);">no entities available</span>
<span class="t" id="t44" style="left:293.0px;top:150.3px;font-size:11.58px;color:#333;font-style:italic;transform:scaleX(1.0337);">A simulation run is an immutable snapshot of the simulation setup at the time of its</span>
<span class="t" id="t45" style="left:293.0px;top:164.2px;font-size:11.58px;color:#333;font-style:italic;transform:scaleX(1.0146);">creation. Hence, runs cannot be restarted. If your simulation setup has changed, just</span>
<span class="t" id="t46" style="left:293.0px;top:178.0px;font-size:11.58px;color:#333;font-style:italic;transform:scaleX(1.0059);">create a new run.</span>
<span class="t" id="t47" style="left:293.0px;top:227.7px;font-size:17.37px;color:#333;font-weight:bold;transform:scaleX(0.9900);">Run Information</span>
<span class="t" id="t48" style="left:293.0px;top:264.1px;font-size:13.51px;color:#333;transform:scaleX(0.9037);">Run name</span>
<span class="t" id="t49" style="left:293.0px;top:303.0px;font-size:13.51px;color:#333;transform:scaleX(0.9625);">Author name</span>
<span class="t" id="t50" style="left:293.0px;top:341.8px;font-size:13.51px;color:#333;transform:scaleX(0.9647);">Creation date</span>
<span class="t" id="t51" style="left:293.0px;top:380.8px;font-size:13.51px;color:#333;transform:scaleX(0.9527);">Last modified</span>
<span class="t" id="t52" style="left:293.0px;top:419.8px;font-size:13.51px;color:#333;transform:scaleX(0.9404);">Status</span>
<span class="t" id="t53" style="left:293.0px;top:498.6px;font-size:13.51px;color:#333;transform:scaleX(0.9461);">Runtime (min)</span>
<span class="t" id="t54" style="left:546.7px;top:274.1px;font-size:13px;color:#555;">2100rad/s</span>
<span class="t" id="t55" style="left:534.8px;top:302.4px;font-size:13px;color:#333;">AsadAli</span>
<span class="t" id="t56" style="left:534.8px;top:341.4px;font-size:13px;color:#333;">2017-04-13 14:32</span>
<span class="t" id="t57" style="left:534.8px;top:380.4px;font-size:13px;color:#333;">2017-04-13 14:32</span>
<span class="t" id="t58" style="left:534.8px;top:419.4px;font-size:13px;color:#333;">Ready to run</span>
<span class="t" id="t59" style="left:534.8px;top:498.4px;font-size:13px;color:#333;">0 min</span>
<span class="t" id="t60" style="left:293.0px;top:553.7px;font-size:17.37px;color:#333;font-weight:bold;transform:scaleX(0.9466);">Simulation Run Event Log</span>
<span class="t" id="t61" style="left:304.7px;top:599.8px;font-size:13.51px;color:#333;transform:scaleX(0.9458);">Time</span>
<span class="t" id="t62" style="left:439.6px;top:599.8px;font-size:13.51px;color:#333;transform:scaleX(0.9325);">Event</span>
<span class="t" id="t63" style="left:463.7px;top:625.2px;font-size:13.51px;color:#333;transform:scaleX(0.9427);">no entities available</span>
<span class="t" id="t64" style="left:294.0px;top:462.4px;font-size:12px;color:#fdfdfd;">0%</span>
<span class="t" id="t65" style="left:560.5px;top:101.5px;font-size:12.06px;color:#fff;transform:scaleX(1.0018);">Start</span>
<span class="t" id="t66" style="left:617.2px;top:101.5px;font-size:12.06px;color:#2a6fb0;transform:scaleX(0.9410);">Results</span>
<span class="t" id="t67" style="left:708.7px;top:101.5px;font-size:12.06px;color:#fff;transform:scaleX(0.9000);">Save</span>
<span class="t" id="t68" style="left:953.4px;top:99.8px;font-size:13.51px;color:#333;transform:scaleX(1.0180);">Orthogonal</span>
<span class="t" id="t69" style="left:1093.3px;top:99.8px;font-size:13.51px;color:#333;transform:scaleX(1.0043);">surfaces with wireframe</span>
<span class="t" id="t70" style="left:1538.3px;top:99.8px;font-size:13.51px;color:#333;transform:scaleX(0.9794);">Create set</span>
<span class="t" id="t71" style="left:1635.6px;top:99.8px;font-size:13.51px;color:#333;transform:scaleX(1.0433);">Filter</span>
<span class="t" id="t72" style="left:1654.2px;top:160.4px;font-size:11.1px;color:#5a9ab8;transform:scaleX(0.9000);">Scene</span>
<span class="t" id="t73" style="left:1670.5px;top:179.0px;font-size:11.1px;color:#5a9ab8;transform:scaleX(0.9433);">3Blade_Mesh</span>
<span class="t" id="t74" style="left:1704.2px;top:199.0px;font-size:11.1px;color:#5a9ab8;transform:scaleX(0.9996);">region0</span>
<span class="t" id="t75" style="left:1704.2px;top:218.8px;font-size:11.1px;color:#c4c4c4;transform:scaleX(0.9570);">Rotation_solid_1</span>
<span class="t" id="t76" style="left:865.0px;top:962.4px;font-size:33px;color:#3db53d;font-weight:bold;font-style:italic;transform:scaleX(0.82);transform-origin:0 0;">Y</span>
<span class="t" id="t77" style="left:885.5px;top:995.3px;font-size:25px;color:#e01212;font-weight:bold;font-style:italic;transform:scaleX(0.8);transform-origin:0 0;">X</span>
<span class="t" id="t78" style="left:878.0px;top:1040.0px;font-size:32px;color:#6c6cf5;font-weight:bold;font-style:italic;transform:scaleX(0.88);transform-origin:0 0;">Z</span>
<span class="t" id="t79" style="left:790.3px;top:1077.1px;font-size:11.1px;color:#999;transform:scaleX(1.0050);">region0</span>
<span class="t" id="t80" style="left:1245.0px;top:1079.7px;font-size:12px;color:#444;">0</span>
<span class="t" id="t81" style="left:1474.8px;top:1079.7px;font-size:12px;color:#444;">0.05</span>
<span class="t" id="t82" style="left:1797.0px;top:1088.6px;font-size:12.06px;color:#fff;transform:scaleX(0.9812);">Report an issue</span>
</body></html>
